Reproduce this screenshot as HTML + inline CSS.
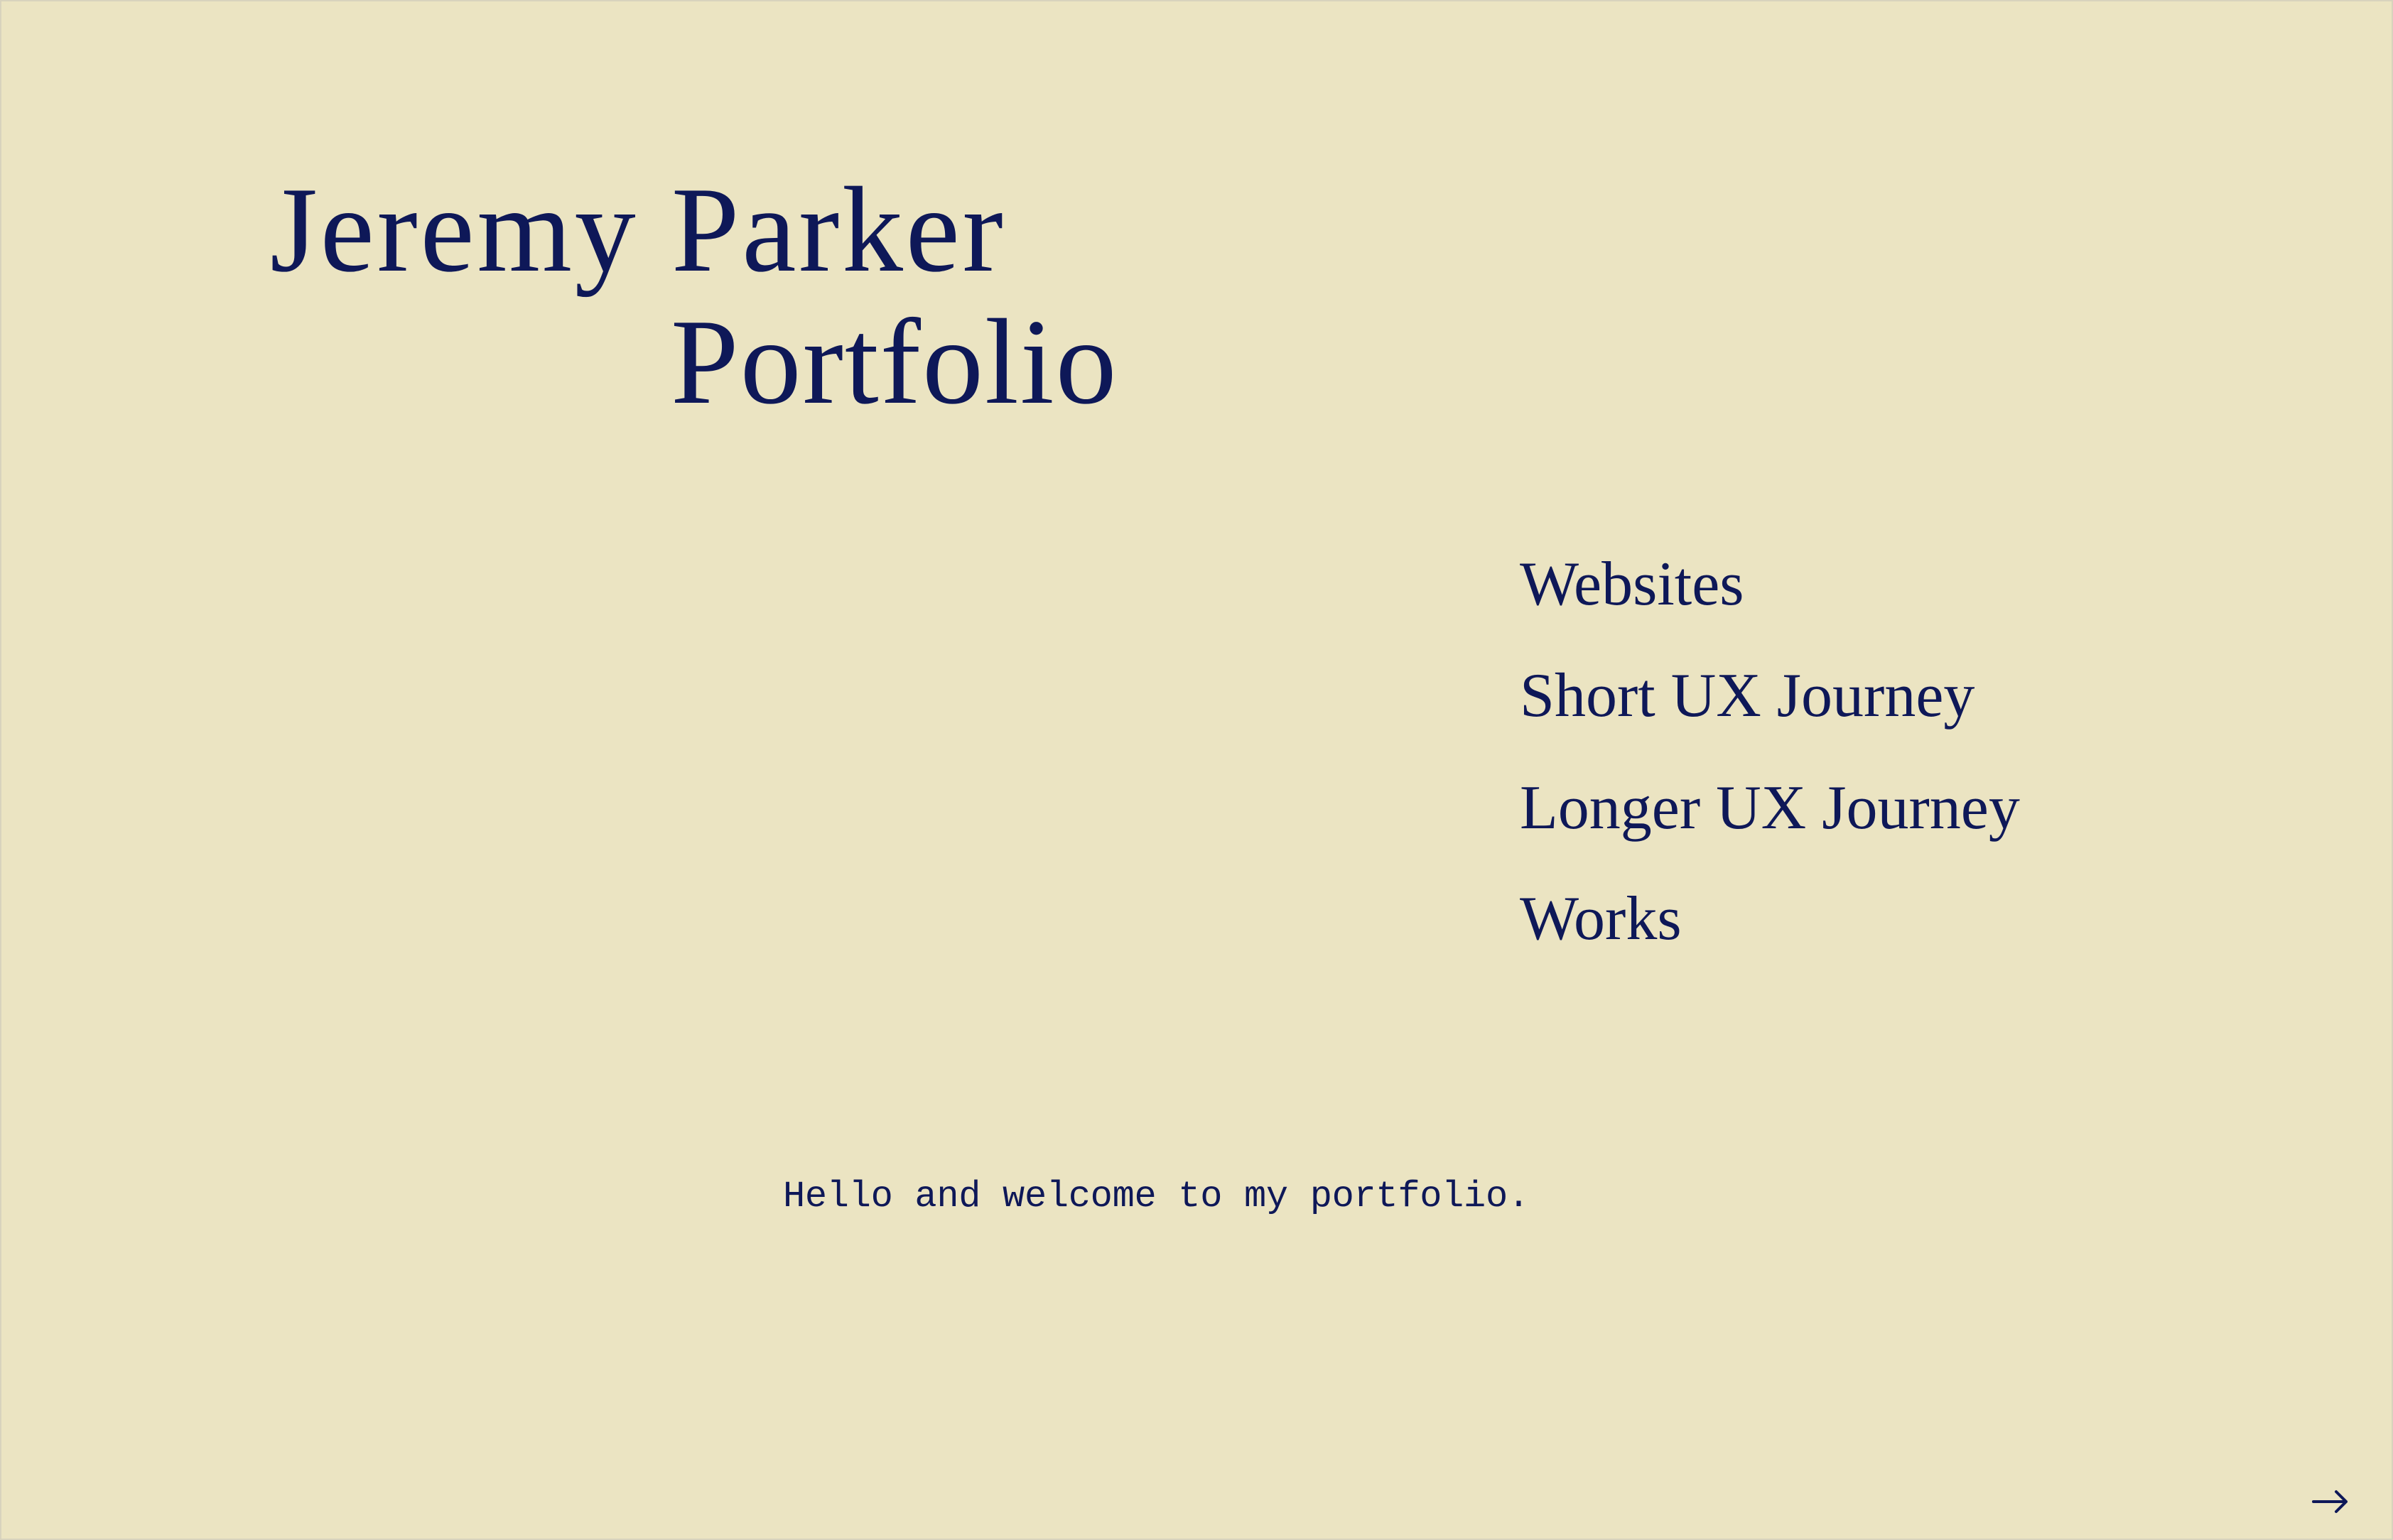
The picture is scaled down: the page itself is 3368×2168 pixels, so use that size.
<!DOCTYPE html>
<html><head><meta charset="utf-8"><style>
html,body{margin:0;padding:0}
body{width:3368px;height:2168px;background:#ebe4c2;position:relative;overflow:hidden;color:#0e1858;box-sizing:border-box;border:2px solid #d8d3bd}
.s{font-family:"Liberation Serif",serif;position:absolute;white-space:nowrap;line-height:1}
.t{font-size:172px}
.n{font-size:88px;left:2137px}
.m{font-family:"Liberation Mono",monospace;font-size:52px;position:absolute;left:1100px;top:1657px;white-space:nowrap;line-height:1;letter-spacing:-0.3px}
</style></head><body>
<div class="s t" style="left:378px;top:236px;letter-spacing:3.6px">Jeremy Parker</div>
<div class="s t" style="left:942px;top:422px;letter-spacing:2px">Portfolio</div>
<div class="s n" style="top:777px">Websites</div>
<div class="s n" style="top:934px">Short UX Journey</div>
<div class="s n" style="top:1092px">Longer UX Journey</div>
<div class="s n" style="top:1248px">Works</div>
<div class="m">Hello and welcome to my portfolio.</div>
<svg style="position:absolute;left:3252px;top:2090px" width="52" height="40" viewBox="0 0 52 40"><path d="M2 22H48M34 8L48 22L34 36" fill="none" stroke="#0e1858" stroke-width="4" stroke-linecap="round" stroke-linejoin="round"/></svg>
</body></html>
